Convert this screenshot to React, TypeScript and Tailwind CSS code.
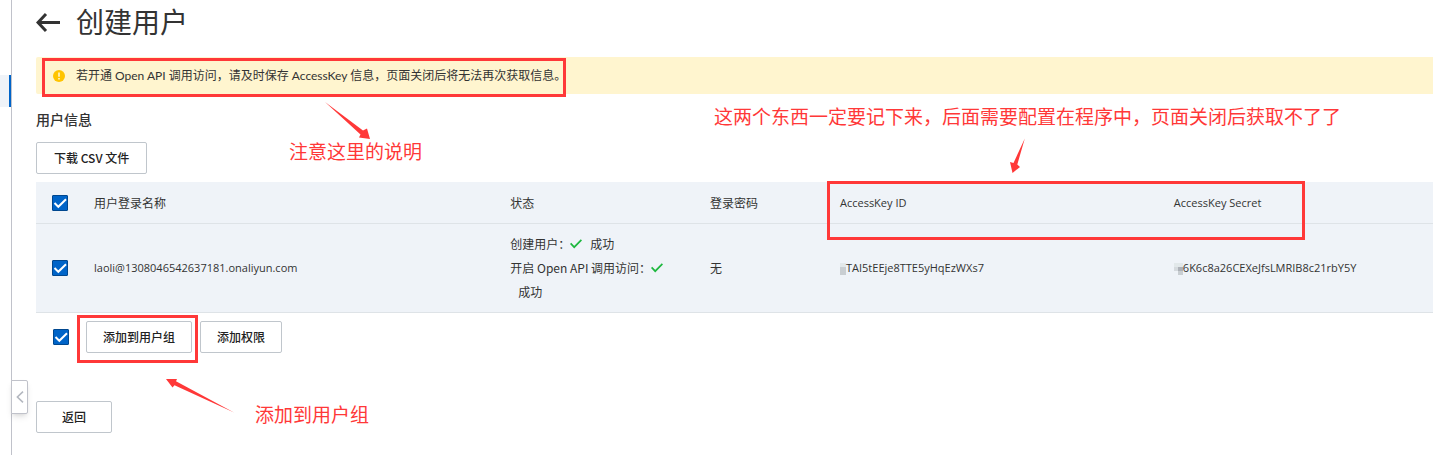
import { ReactNode } from "react";
import { clsx } from "clsx";

interface CheckboxProps {
  label: string;
}

function Checkbox({ label }: CheckboxProps) {
  return (
    <label className="relative block size-4">
      <input
        type="checkbox"
        defaultChecked
        aria-label={label}
        className="peer block size-4 appearance-none rounded-[1px] border border-[#888] bg-white checked:border-[#00478f] checked:bg-[#0064c8]"
      />
      <svg
        viewBox="0 0 16 16"
        className="pointer-events-none absolute inset-0 hidden size-4 peer-checked:block"
        fill="none"
        stroke="#fff"
        strokeWidth="2"
      >
        <path d="M2.5 8l3.8 3.8L14 4.2" />
      </svg>
    </label>
  );
}

interface ButtonProps {
  children: ReactNode;
  className?: string;
}

function Button({ children, className }: ButtonProps) {
  return (
    <button
      type="button"
      className={clsx(
        "h-8 rounded-xs border border-[#c0c6cc] bg-white px-4 text-xs font-medium text-[#222]",
        className
      )}
    >
      {children}
    </button>
  );
}

function SuccessMark() {
  return (
    <>
      <svg viewBox="0 0 12 12" className="inline-block size-3 align-[-1px]" fill="none" stroke="#1eb83f" strokeWidth="1.7">
        <path d="M0.6 5.4l3.6 3.8 7.2-7.4" />
      </svg>
      <wbr />
      <span className="ml-2 inline-block">成功</span>
    </>
  );
}

const columns = [
  { title: "用户登录名称" },
  { title: "状态" },
  { title: "登录密码" },
  { title: "AccessKey ID", latin: true },
  { title: "AccessKey Secret", latin: true },
];

// Red marks drawn over the page
function Annotations() {
  return (
    <div className="pointer-events-none absolute inset-0 text-[19px] leading-6 whitespace-nowrap text-[#ff3838]">
      <div className="absolute top-[58px] left-[42px] h-[39px] w-[524px] border-3 border-[#ff3838]" />
      <div className="absolute top-[181px] left-[827px] h-[59px] w-[478px] border-3 border-[#ff3838]" />
      <div className="absolute top-[315px] left-[77px] h-12 w-[121px] border-3 border-[#ff3838]" />
      <svg className="absolute top-[102px] left-[325px] h-[38px] w-[46px]" viewBox="0 0 46 38" fill="#ff3838">
        <path d="M0 0L38 28.5 42 26.5 45 37 34 35.5 35.5 32.5z" />
      </svg>
      <svg className="absolute top-[138px] left-[1010px] h-9 w-4" viewBox="0 0 16 36" fill="#ff3838">
        <path d="M14.8 0.5L7.3 26.5 10 29 2.5 35 0 24 3.5 25z" />
      </svg>
      <svg className="absolute top-[378px] left-[166px] h-9 w-[70px]" viewBox="0 0 70 36" fill="#ff3838">
        <path d="M68 34.5L8.5 7.3 6.5 9.5 0 1 11 1 10 3.3z" />
      </svg>
      <p className="absolute top-[139px] left-[289px]">注意这里的说明</p>
      <p className="absolute top-[104px] left-[714px]">
        这两个东西一定要记下来，后面需要配置在程序中，页面关闭后获取不了了
      </p>
      <p className="absolute top-[402px] left-[255px]">添加到用户组</p>
    </div>
  );
}

export default function App() {
  return (
    <div className="relative flex min-h-screen overflow-hidden bg-white font-['Noto_Sans_CJK_SC',sans-serif] text-xs text-[#333]">
      {/* Sidebar edge */}
      <aside className="relative w-3 shrink-0 border-r border-[#c0c2ca] pt-[75px]">
        <div className="h-8 border-r-2 border-[#0064c8] bg-[#eff3f8]" />
        <button
          type="button"
          aria-label="收起"
          className="absolute top-[380px] left-[11px] z-10 flex h-[34px] w-[17px] items-center justify-center rounded-r-xs border border-[#c0c2ca] bg-white shadow-md"
        >
          <svg viewBox="0 0 8 12" className="h-3 w-2" fill="none" stroke="#b4b8c0" strokeWidth="1.6">
            <path d="M7 0.6L1.4 6 7 11.4" />
          </svg>
        </button>
      </aside>

      <main className="min-w-0 flex-1 pl-6">
        <header className="flex h-[57px] items-start gap-4 pt-1">
          <a href="#" aria-label="返回" className="mt-1.5 block">
            <svg viewBox="0 0 24 24" className="size-6" fill="none" stroke="#333" strokeWidth="3">
              <path d="M10 4L2 12.5 10 21M2 12.5H24" />
            </svg>
          </a>
          <h1 className="text-[28px] leading-[34px]">创建用户</h1>
        </header>

        <div className="flex h-[37px] items-center gap-[11px] rounded-l-xs bg-[#fff5cf] pl-[17px]">
          <svg viewBox="0 0 12 12" className="size-3">
            <circle cx="6" cy="6" r="6" fill="#ffc400" />
            <path d="M6 2.5v4.3M6 8v1.6" stroke="#fff5cf" strokeWidth="1.6" />
          </svg>
          <p className="font-[Lato,'Noto_Sans_CJK_SC',sans-serif]">
            若开通 Open API 调用访问，请及时保存 AccessKey 信息，页面关闭后将无法再次获取信息。
          </p>
        </div>

        <h2 className="mt-[15px] text-sm leading-5 font-medium">用户信息</h2>
        <Button className="mt-[13px] px-[17px]">下载 CSV 文件</Button>

        <table className="mt-2 w-full table-fixed border-collapse bg-[#eff3f8] text-left">
          <colgroup>
            <col className="w-[42px]" />
            <col className="w-[29.8%]" />
            <col className="w-[14.3%]" />
            <col className="w-[9.3%]" />
            <col className="w-[23.9%]" />
            <col />
          </colgroup>
          <thead>
            <tr className="h-[41px] border-b border-[#dee3e7]">
              <th className="pt-0.5 pl-4">
                <Checkbox label="全选" />
              </th>
              {columns.map(({ title, latin }) => (
                <th
                  key={title}
                  className={clsx("px-4 pt-0.5 font-normal", latin && "font-['Open_Sans',sans-serif] text-[11px]")}
                >
                  {title}
                </th>
              ))}
            </tr>
          </thead>
          <tbody>
            <tr className="h-[89px] border-b border-[#dee3e7]">
              <td className="pl-4">
                <Checkbox label="选择 laoli" />
              </td>
              <td className="px-4 pt-0.5 font-['Open_Sans',sans-serif] text-[11px]">laoli@1308046542637181.onaliyun.com</td>
              <td className="px-4 leading-6">
                <div>
                  创建用户：
                  <SuccessMark />
                </div>
                <div>
                  开启 Open API 调用访问：
                  <SuccessMark />
                </div>
              </td>
              <td className="px-4">无</td>
              <td className="px-4 pt-0.5 font-['Open_Sans',sans-serif] text-[11px]">
                <div className="flex items-center">
                  <span className="grid h-3 w-[6px] grid-rows-3 bg-[#c9ced2]">
                    <span className="bg-[#e2e8ea]" />
                  </span>
                  TAI5tEEje8TTE5yHqEzWXs7
                </div>
              </td>
              <td className="px-4 pt-0.5 font-['Open_Sans',sans-serif] text-[11px]">
                <div className="flex items-center">
                  <span className="grid h-3 w-[9px] grid-cols-2 grid-rows-3">
                    <span className="bg-[#e2e8ea]" />
                    <span className="bg-[#e2e8ea]" />
                    <span className="bg-[#d5dade]" />
                    <span className="bg-[#adb1b8]" />
                    <span />
                    <span className="bg-[#c9ced2]" />
                  </span>
                  6K6c8a26CEXeJfsLMRIB8c21rbY5Y
                </div>
              </td>
            </tr>
          </tbody>
        </table>

        <div className="mt-2 flex items-center gap-2 pl-[17px]">
          <Checkbox label="选择全部用户" />
          <Button className="ml-[9px]">添加到用户组</Button>
          <Button>添加权限</Button>
        </div>

        <Button className="mt-12 px-[25px]">返回</Button>
      </main>

      <Annotations />
    </div>
  );
}
